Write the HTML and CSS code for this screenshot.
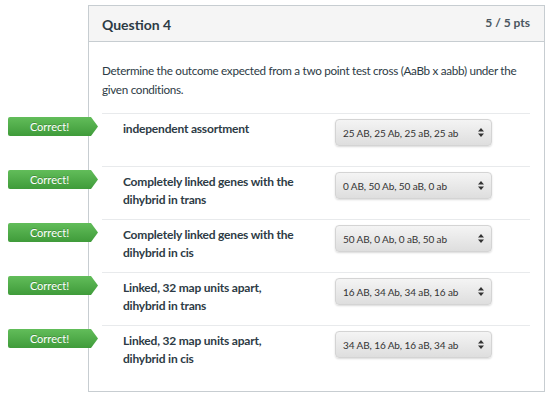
FILE: index.html
```html
<!DOCTYPE html>
<html>
<head>
<meta charset="utf-8">
<link rel="stylesheet" href="styles.css">
</head>
<body>
<div class="page">
  <div class="question">
    <div class="header">
      <span class="title">Question 4</span>
      <span class="pts">5 / 5 pts</span>
    </div>
    <div class="content">
      <p class="text">Determine the outcome expected from a two point test cross (AaBb x aabb) under the given conditions.</p>
      <div class="answers">
        <div class="row">
          <div class="badge">Correct!</div>
          <div class="label">independent assortment</div>
          <div class="select"><span>25 AB, 25 Ab, 25 aB, 25 ab</span><svg class="arr" width="6" height="9" viewBox="0 0 6 9"><path d="M3 0L6 3.5H0Z M3 9L6 5.5H0Z" fill="#333"/></svg></div>
        </div>
        <div class="row">
          <div class="badge">Correct!</div>
          <div class="label">Completely linked genes with the dihybrid in trans</div>
          <div class="select"><span>0 AB, 50 Ab, 50 aB, 0 ab</span><svg class="arr" width="6" height="9" viewBox="0 0 6 9"><path d="M3 0L6 3.5H0Z M3 9L6 5.5H0Z" fill="#333"/></svg></div>
        </div>
        <div class="row">
          <div class="badge">Correct!</div>
          <div class="label">Completely linked genes with the dihybrid in cis</div>
          <div class="select"><span>50 AB, 0 Ab, 0 aB, 50 ab</span><svg class="arr" width="6" height="9" viewBox="0 0 6 9"><path d="M3 0L6 3.5H0Z M3 9L6 5.5H0Z" fill="#333"/></svg></div>
        </div>
        <div class="row">
          <div class="badge">Correct!</div>
          <div class="label">Linked, 32 map units apart, dihybrid in trans</div>
          <div class="select"><span>16 AB, 34 Ab, 34 aB, 16 ab</span><svg class="arr" width="6" height="9" viewBox="0 0 6 9"><path d="M3 0L6 3.5H0Z M3 9L6 5.5H0Z" fill="#333"/></svg></div>
        </div>
        <div class="row">
          <div class="badge">Correct!</div>
          <div class="label">Linked, 32 map units apart, dihybrid in cis</div>
          <div class="select"><span>34 AB, 16 Ab, 16 aB, 34 ab</span><svg class="arr" width="6" height="9" viewBox="0 0 6 9"><path d="M3 0L6 3.5H0Z M3 9L6 5.5H0Z" fill="#333"/></svg></div>
        </div>
      </div>
    </div>
  </div>
</div>
</body>
</html>
```

FILE: styles.css
```css
* { box-sizing: border-box; }
html, body { margin: 0; padding: 0; background: #fff; }
body {
  font-family: Lato, "Open Sans", sans-serif;
  color: #2d3b45;
}
.page {
  padding: 5px 0 0 88px;
}
.question {
  width: 457px;
  border: 1px solid #c7cdd1;
  background: #fff;
}
.header {
  display: flex;
  justify-content: space-between;
  align-items: center;
  height: 36px;
  padding: 0 14px 0 13px;
  background: #f5f5f5;
  border-bottom: 1px solid #c7cdd1;
}
.title {
  font-size: 14px;
  font-weight: bold;
  padding-top: 2px;
}
.pts {
  font-size: 12px;
  font-weight: bold;
  color: #4a5660;
  padding-bottom: 2px;
}
.content {
  padding: 19px 14px 13px 13px;
}
.text {
  margin: 0 0 14px 0;
  font-size: 11.7px;
  letter-spacing: -0.3px;
  line-height: 19px;
}
.answers {
  display: flex;
  flex-direction: column;
}
.row {
  position: relative;
  display: flex;
  align-items: flex-start;
  height: 53px;
  padding: 5px 0 0 21px;
  border-top: 1px solid #e8eaec;
}
.label {
  width: 212px;
  padding-right: 30px;
  padding-top: 1px;
  font-size: 12px;
  font-weight: bold;
  letter-spacing: -0.2px;
  line-height: 18px;
}
.select {
  display: flex;
  align-items: center;
  justify-content: space-between;
  width: 157px;
  height: 27px;
  padding: 0 7px 0 7px;
  border: 1px solid #d4d4d4;
  border-radius: 4px;
  background: linear-gradient(#f4f4f4, #dedede);
  box-shadow: 0 1px 2px rgba(0,0,0,0.15);
  font-size: 10px;
  letter-spacing: -0.1px;
  color: #333;
}
.arr { display: block; }
.badge {
  position: absolute;
  left: -94px;
  top: 3px;
  width: 90px;
  height: 19px;
  line-height: 19px;
  padding-right: 7px;
  text-align: center;
  color: #fff;
  font-size: 11px;
  border-radius: 2px 0 0 2px;
  background: linear-gradient(#62bd5a, #3f9b3a);
  clip-path: polygon(0 0, 83px 0, 90px 50%, 83px 100%, 0 100%);
  text-shadow: 0 -1px 0 rgba(0,0,0,0.2);
}
```
